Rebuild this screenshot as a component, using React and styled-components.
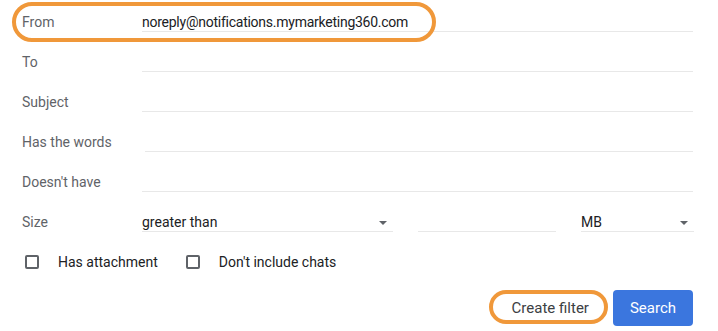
import styled, { createGlobalStyle } from 'styled-components';

const Global = createGlobalStyle`
  html, body { margin: 0; padding: 0; background: #fff; }
  body { font-family: Roboto, "Noto Sans", Arial, sans-serif; }
`;

const Form = styled.div`
  width: 718px;
  height: 331px;
  box-sizing: border-box;
  padding: 0 25px 0 22px;
`;

const Row = styled.div`
  position: relative;
  display: grid;
  grid-template-columns: 120px 1fr;
  align-items: start;
  height: 40px;

  ${(p) => p.$marked && `
    &::after {
      content: '';
      position: absolute;
      left: -10px; top: 2px;
      width: 424px; height: 40px;
      box-sizing: border-box;
      border: 4px solid #f0983a;
      border-radius: 20px;
      pointer-events: none;
    }
  `}
`;

const Label = styled.span`
  padding-top: 14px;
  line-height: 17px;
  font-size: 14px;
  color: #5f6368;
`;

const Field = styled.div`
  box-sizing: border-box;
  height: 22px;
  margin: 10px 0 0 ${(p) => p.$inset || 0}px;
  padding-top: 4px;
  border-bottom: 1px solid #e8e8e8;
  font-size: 14px;
  line-height: 17px;
  letter-spacing: ${(p) => (p.$tight ? '-0.25px' : 'normal')};
  color: #202124;
  display: flex;
  align-items: center;
  justify-content: space-between;
`;

const SizeGroup = styled.div`
  display: grid;
  grid-template-columns: 251px 138px 113px;
  column-gap: 25px;
`;

const Caret = styled.span`
  width: 0; height: 0;
  margin-right: 6px;
  border-left: 4px solid transparent;
  border-right: 4px solid transparent;
  border-top: 4px solid #5f6368;
`;

const Checks = styled.div`
  display: flex;
  align-items: center;
  height: 40px;
  padding: 3px 0 0 3px;
  box-sizing: border-box;
`;

const Check = styled.label`
  display: flex;
  align-items: center;
  gap: 19px;
  margin-right: 28px;
  font-size: 14px;
  color: #202124;
`;

const Box = styled.span`
  width: 14px; height: 14px;
  box-sizing: border-box;
  border: 2px solid #5f6368;
  border-radius: 2px;
`;

const Actions = styled.div`
  display: flex;
  justify-content: flex-end;
  align-items: center;
  gap: 12px;
  margin-top: 10px;
`;

const Button = styled.button`
  position: relative;
  height: 36px;
  padding: 0 ${(p) => (p.$primary ? 17 : 12)}px;
  border: none;
  border-radius: 4px;
  font-family: inherit;
  font-size: 15px;
  color: ${(p) => (p.$primary ? '#fff' : '#3c4043')};
  background: ${(p) => (p.$primary ? '#3b76de' : 'transparent')};

  ${(p) => p.$marked && `
    &::after {
      content: '';
      position: absolute;
      left: -11px; right: -7px; top: 0; height: 34px;
      box-sizing: border-box;
      border: 4px solid #f0983a;
      border-radius: 17px;
    }
  `}
`;

const fields = [
  ['To'],
  ['Subject'],
  ['Has the words', 3],
  ["Doesn't have"],
];

export default function App() {
  return (
    <Form>
      <Global />
      <Row $marked>
        <Label>From</Label>
        <Field $tight>noreply@notifications.mymarketing360.com</Field>
      </Row>
      {fields.map(([name, inset]) => (
        <Row key={name}>
          <Label>{name}</Label>
          <Field $inset={inset} />
        </Row>
      ))}
      <Row>
        <Label>Size</Label>
        <SizeGroup>
          <Field>greater than<Caret /></Field>
          <Field />
          <Field>MB<Caret /></Field>
        </SizeGroup>
      </Row>
      <Checks>
        <Check><Box />Has attachment</Check>
        <Check><Box />Don't include chats</Check>
      </Checks>
      <Actions>
        <Button $marked>Create filter</Button>
        <Button $primary>Search</Button>
      </Actions>
    </Form>
  );
}
